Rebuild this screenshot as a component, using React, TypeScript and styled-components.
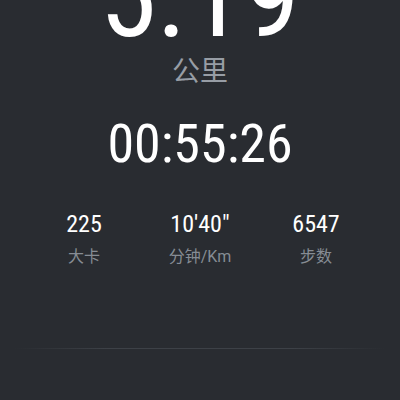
import React from "react";
import styled, { createGlobalStyle } from "styled-components";

const GlobalStyle = createGlobalStyle`
  html, body {
    margin: 0;
    padding: 0;
    background: #292c31;
  }
  body {
    font-family: "Roboto Condensed", "Noto Sans CJK SC", sans-serif;
    color: #ffffff;
    overflow: hidden;
  }
`;

const Screen = styled.main`
  width: 400px;
  height: 400px;
  overflow: hidden;
  display: flex;
  flex-direction: column;
  align-items: center;
  background: #292c31;
`;

const Distance = styled.div`
  margin-top: -61px;
  font-family: "Roboto Condensed", sans-serif;
  font-size: 115px;
  line-height: 115px;
  font-weight: 400;
  color: #ffffff;
  white-space: nowrap;
`;

const Unit = styled.div`
  margin-top: 1px;
  font-family: "Noto Sans CJK SC", sans-serif;
  font-size: 28px;
  line-height: 28px;
  color: #979da5;
`;

const Duration = styled.div`
  margin-top: 34px;
  font-family: "Roboto Condensed", sans-serif;
  font-size: 54px;
  line-height: 54px;
  font-weight: 400;
  color: #ffffff;
  white-space: nowrap;
`;

const Stats = styled.section`
  margin-top: 41px;
  width: 100%;
  box-sizing: border-box;
  padding: 0 26px;
  display: grid;
  grid-template-columns: repeat(3, 1fr);
`;

const Stat = styled.div`
  display: flex;
  flex-direction: column;
  align-items: center;
  gap: 13px;
`;

const StatValue = styled.span`
  font-family: "Roboto Condensed", sans-serif;
  font-size: 24px;
  line-height: 24px;
  color: #ffffff;
  white-space: nowrap;
`;

const StatLabel = styled.span`
  font-family: "Roboto", "Noto Sans CJK SC", sans-serif;
  font-size: 16px;
  line-height: 16px;
  color: #868c94;
  white-space: nowrap;
`;

const Divider = styled.hr`
  margin: 83px 0 0;
  width: 370px;
  height: 1px;
  border: 0;
  background: linear-gradient(
    to right,
    rgba(70, 74, 80, 0) 0%,
    #3d4147 25%,
    #3d4147 75%,
    rgba(70, 74, 80, 0) 100%
  );
`;

const stats = [
  { value: "225", label: "大卡" },
  { value: "10'40\"", label: "分钟/Km" },
  { value: "6547", label: "步数" },
];

export default function App() {
  return (
    <>
      <GlobalStyle />
      <Screen>
        <Distance>5.19</Distance>
        <Unit>公里</Unit>
        <Duration>00:55:26</Duration>
        <Stats>
          {stats.map((s) => (
            <Stat key={s.label}>
              <StatValue>{s.value}</StatValue>
              <StatLabel>{s.label}</StatLabel>
            </Stat>
          ))}
        </Stats>
        <Divider />
      </Screen>
    </>
  );
}
